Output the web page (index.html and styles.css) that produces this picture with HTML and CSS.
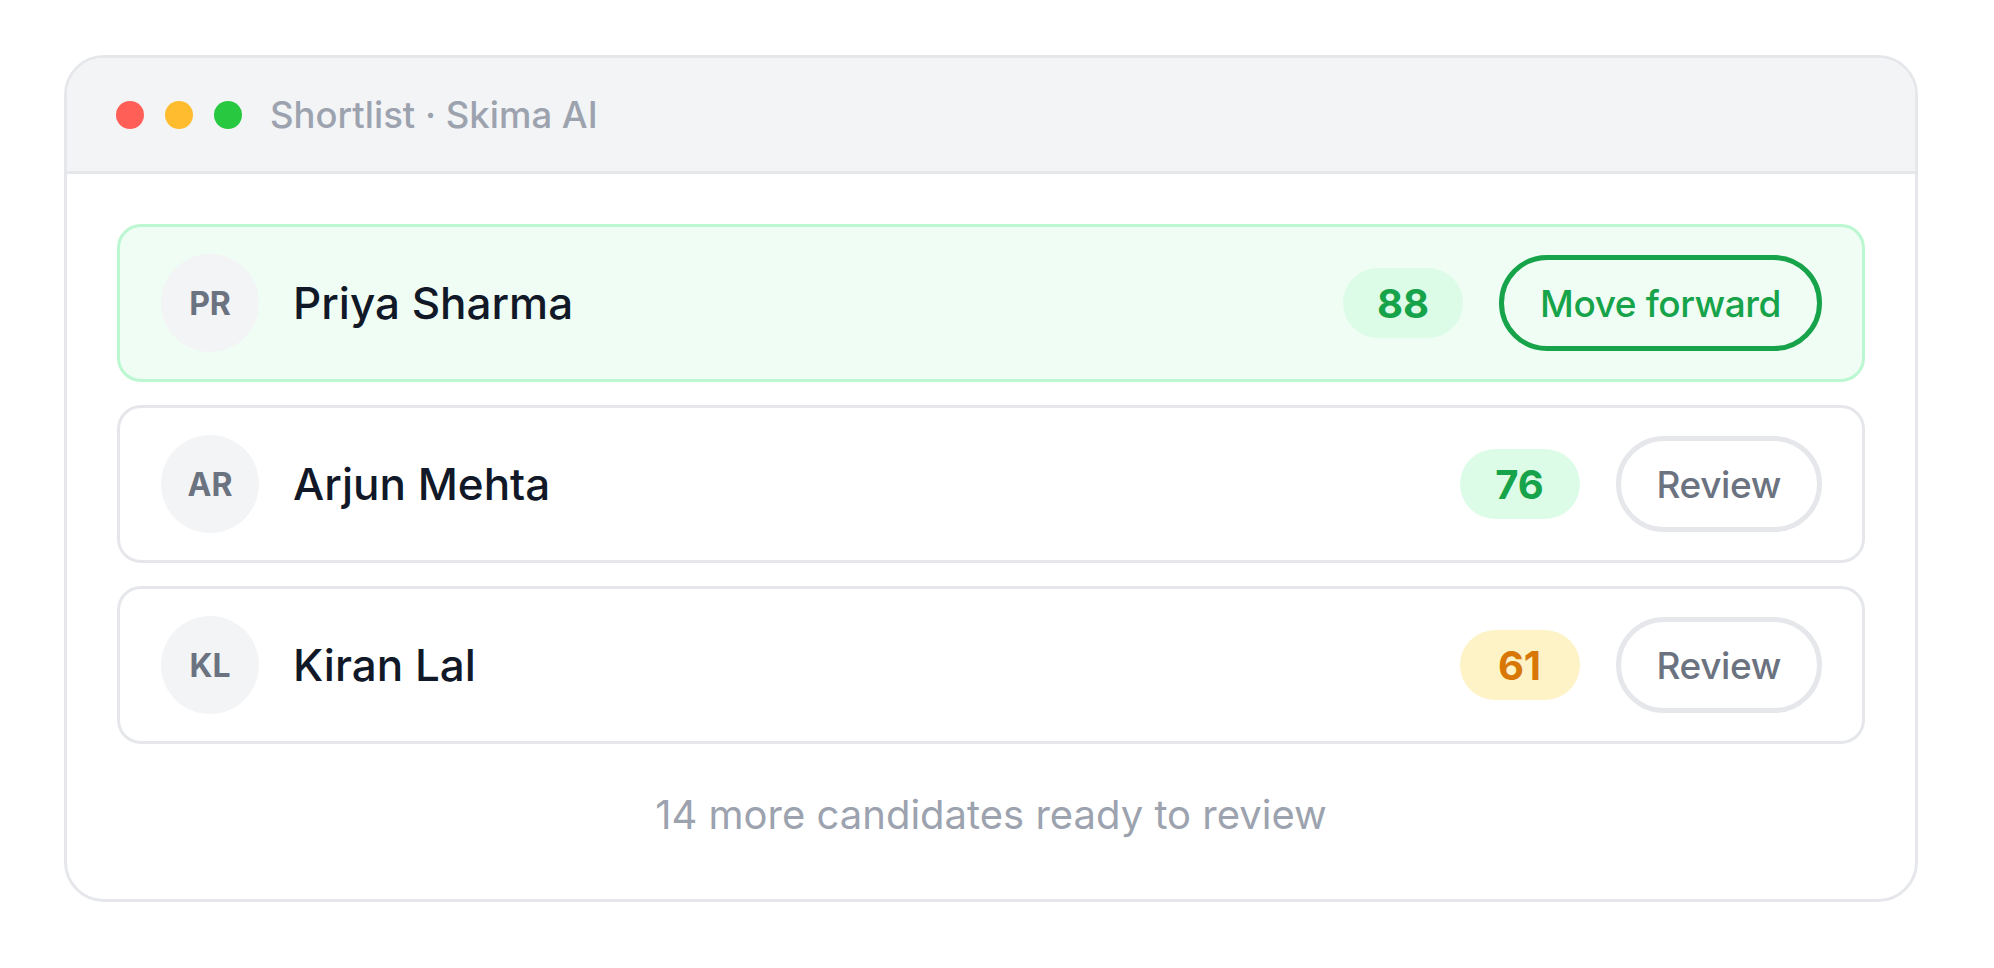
FILE: index.html
```html
<!DOCTYPE html>
<html lang="en">
<head>
    <meta charset="UTF-8">
    <meta name="viewport" content="width=device-width, initial-scale=1.0">
    <title>Shortlist · Skima AI</title>
    <link rel="stylesheet" href="styles.css">
</head>
<body>

    <div class="page">
        <div class="window">

            <!-- Title bar -->
            <div class="titlebar">
                <span class="light red"></span>
                <span class="light yellow"></span>
                <span class="light green"></span>
                <span class="window-title">Shortlist · Skima AI</span>
            </div>

            <!-- Candidate list -->
            <div class="content">
                <div class="candidate top">
                    <div class="avatar">PR</div>
                    <div class="name">Priya Sharma</div>
                    <div class="score high">88</div>
                    <button class="action primary">Move forward</button>
                </div>

                <div class="candidate">
                    <div class="avatar">AR</div>
                    <div class="name">Arjun Mehta</div>
                    <div class="score high">76</div>
                    <button class="action">Review</button>
                </div>

                <div class="candidate">
                    <div class="avatar">KL</div>
                    <div class="name">Kiran Lal</div>
                    <div class="score mid">61</div>
                    <button class="action">Review</button>
                </div>

                <p class="more">14 more candidates ready to review</p>
            </div>

        </div>
    </div>

</body>
</html>
```

FILE: styles.css
```css
body {
    font-family: Inter, "Noto Sans", sans-serif;
    margin: 0;
    padding: 0;
    background-color: #fff;
}

.page {
    padding: 55px 0 0 64px;
}

/* Window frame */
.window {
    width: 1854px;
    box-sizing: border-box;
    border: 3px solid #e5e7eb;
    border-radius: 40px;
    overflow: hidden;
    background-color: #fff;
}

.titlebar {
    height: 113px;
    display: flex;
    align-items: center;
    padding-left: 49px;
    background-color: #f3f4f6;
    border-bottom: 3px solid #e5e7eb;
}

.light {
    width: 28px;
    height: 28px;
    border-radius: 50%;
    margin-right: 21px;
}

.red { background-color: #ff5f57; }
.yellow { background-color: #febc2e; }
.green { background-color: #28c840; margin-right: 28px; }

.window-title {
    font-size: 36.5px;
    font-weight: 500;
    color: #9ca3af;
}

/* List */
.content {
    padding: 50px 50px 57px;
    display: flex;
    flex-direction: column;
    gap: 23px;
}

.candidate {
    height: 158px;
    box-sizing: border-box;
    display: flex;
    align-items: center;
    padding: 0 40px 0 41px;
    border: 3px solid #e5e7eb;
    border-radius: 24px;
    background-color: #fff;
}

.candidate.top {
    background-color: #f0fdf4;
    border-color: #bbf7d0;
}

.avatar {
    width: 98px;
    height: 98px;
    border-radius: 50%;
    background-color: #f3f4f6;
    color: #6b7280;
    font-size: 32px;
    font-weight: 700;
    display: flex;
    align-items: center;
    justify-content: center;
    flex-shrink: 0;
}

.name {
    flex: 1;
    margin-left: 34px;
    font-size: 44px;
    font-weight: 500;
    color: #111827;
}

.score {
    width: 120px;
    height: 70px;
    border-radius: 35px;
    display: flex;
    align-items: center;
    justify-content: center;
    font-size: 40px;
    font-weight: 700;
    margin-right: 36px;
}

.score.high {
    background-color: #dcfce7;
    color: #16a34a;
}

.score.mid {
    background-color: #fef3c7;
    color: #d97706;
}

.action {
    height: 96px;
    box-sizing: border-box;
    padding: 0 36px;
    border: 5px solid #e5e7eb;
    border-radius: 48px;
    background-color: #fff;
    color: #6b7280;
    font-family: inherit;
    font-size: 37px;
    font-weight: 500;
    letter-spacing: -0.4px;
    cursor: pointer;
}

.action.primary {
    border-color: #16a34a;
    color: #16a34a;
    background-color: transparent;
}

.more {
    margin: 21px 0 0;
    text-align: center;
    font-size: 40px;
    line-height: 54px;
    color: #9ca3af;
}
```
